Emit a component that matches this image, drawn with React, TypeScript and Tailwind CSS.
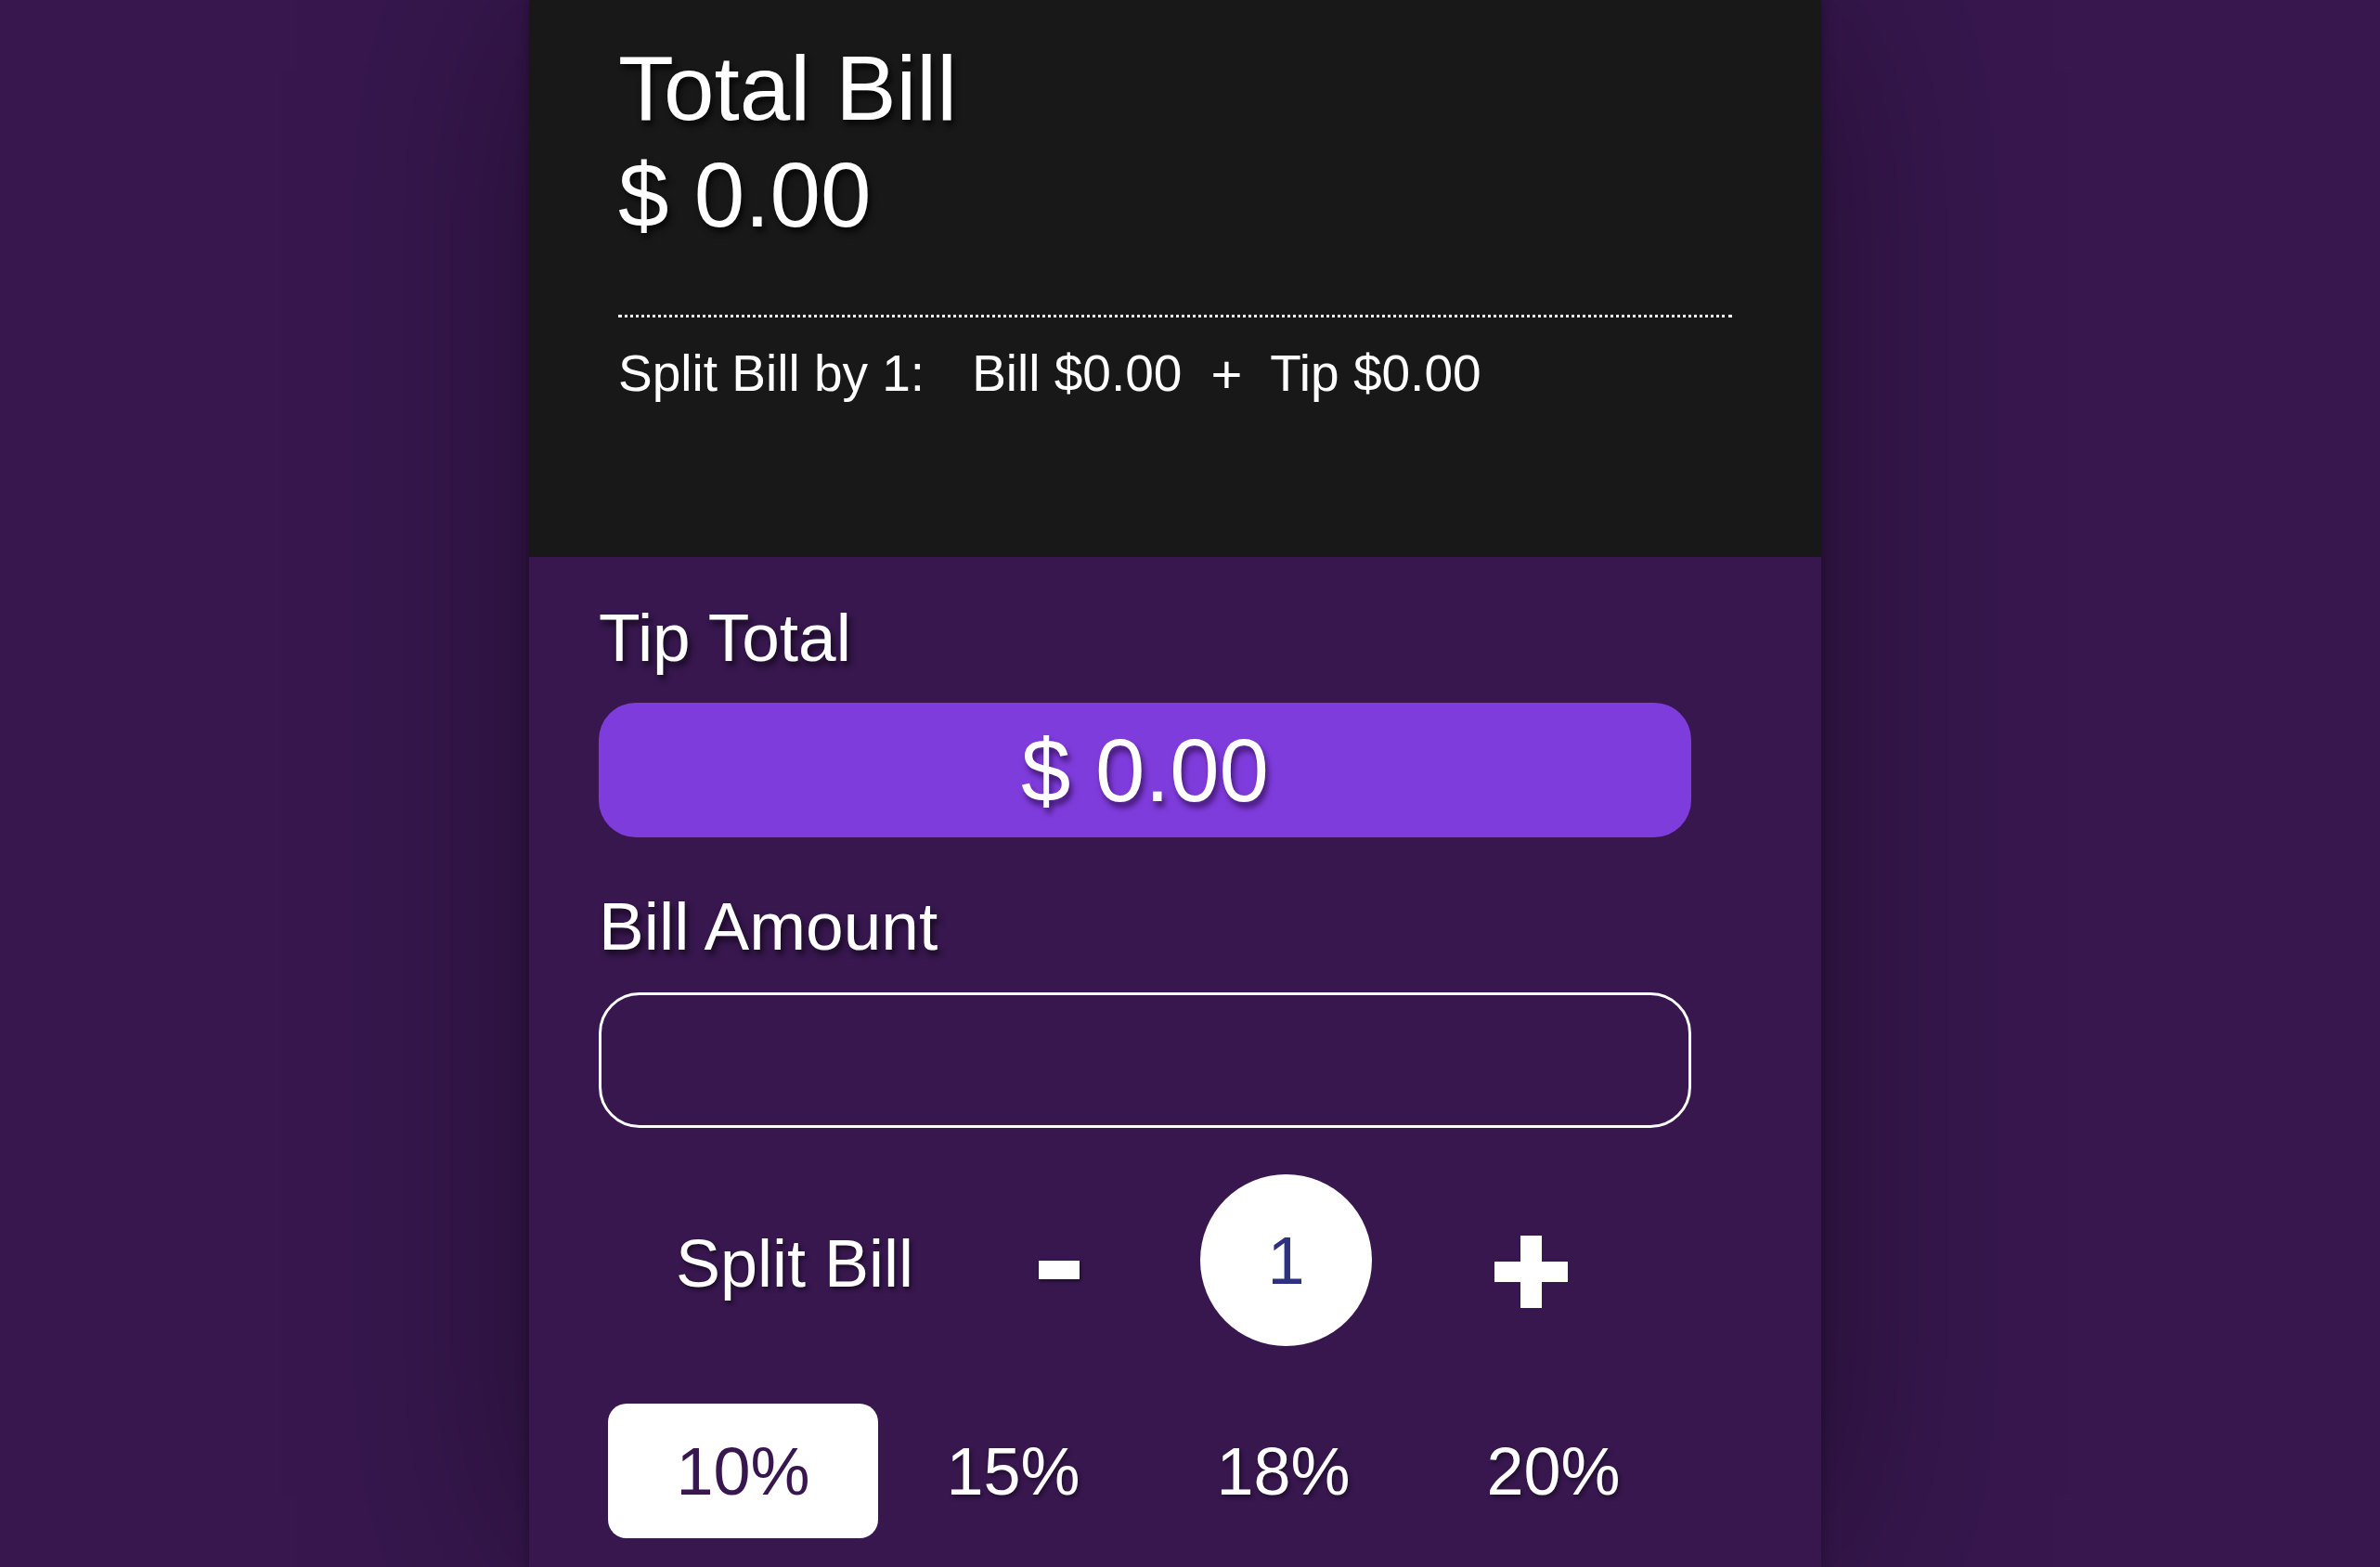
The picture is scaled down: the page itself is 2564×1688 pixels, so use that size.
import React, { useState } from 'react';

const tips = ['10%', '15%', '18%', '20%'];

const App = () => {
  const [tip, setTip] = useState('10%');
  const [people, setPeople] = useState(1);

  return (
    <div className="h-[1688px] overflow-hidden bg-[#37174e] font-['Liberation_Sans',Arial,sans-serif] text-white">
      <div className="ml-[570px] h-full w-[1392px] bg-[#37174e] shadow-[0_0_12px_rgba(0,0,0,0.35),0_0_220px_rgba(0,0,0,0.4)]">
        {/* Summary */}
        <header className="h-[600px] bg-[#181818] px-[96px] pt-[38px]">
          <h1 className="text-[98px] leading-[115px] [text-shadow:3px_5px_6px_rgba(0,0,0,0.7)]">Total Bill</h1>
          <p className="text-[98px] leading-[115px] [text-shadow:3px_5px_6px_rgba(0,0,0,0.7)]">$ 0.00</p>
          <div className="mt-[71px] border-t-[3px] border-dotted border-white" />
          <div className="mt-[29px] flex text-[55px] leading-[63px]">
            <span>Split Bill by {people}:</span>
            <span className="ml-[51px]">Bill $0.00</span>
            <span className="ml-[31px] text-[58px]">+</span>
            <span className="ml-[30px]">Tip $0.00</span>
          </div>
        </header>

        {/* Inputs */}
        <section className="px-[75px] pt-[45px]">
          <h2 className="text-[73px] leading-[84px] [text-shadow:3px_5px_6px_rgba(0,0,0,0.6)]">Tip Total</h2>
          <div className="mt-[28px] flex h-[145px] w-[1177px] items-center justify-center rounded-[40px] bg-[#7f3cdc] text-[96px] [text-shadow:3px_6px_6px_rgba(40,10,70,0.7)]">
            $ 0.00
          </div>

          <h2 className="mt-[54px] text-[73px] leading-[84px] [text-shadow:3px_5px_6px_rgba(0,0,0,0.6)]">Bill Amount</h2>
          <input
            type="text"
            className="mt-[29px] block h-[146px] w-[1177px] rounded-[44px] border-[3px] border-white bg-transparent px-[40px] text-[72px] text-white outline-none"
          />

          {/* Split bill */}
          <div className="mt-[50px] flex h-[185px] items-center">
            <span className="ml-[83px] mt-[8px] text-[72px] leading-[83px] [text-shadow:2px_3px_4px_rgba(0,0,0,0.5)]">Split Bill</span>
            <button
              aria-label="minus"
              className="ml-[135px] mt-[20px] flex h-[20px] w-[44px] items-center"
              onClick={() => setPeople(Math.max(1, people - 1))}
            >
              <span className="block h-[20px] w-[44px] bg-white shadow-[1px_2px_3px_rgba(0,0,0,0.5)]" />
            </button>
            <div className="ml-[130px] flex h-[185px] w-[185px] items-center justify-center rounded-full bg-white text-[72px] text-[#2e3180]">
              {people}
            </div>
            <button
              aria-label="plus"
              className="relative ml-[132px] mt-[24px] h-[78px] w-[79px]"
              onClick={() => setPeople(people + 1)}
            >
              <span className="absolute left-0 top-[28px] block h-[22px] w-[79px] bg-white" />
              <span className="absolute left-[28px] top-0 block h-[78px] w-[23px] bg-white" />
            </button>
          </div>

          {/* Tip percentages */}
          <div className="ml-[10px] mt-[62px] flex">
            {tips.map((t) => (
              <button
                key={t}
                onClick={() => setTip(t)}
                className={
                  tip === t
                    ? 'flex h-[145px] w-[291px] items-center justify-center rounded-[20px] bg-white text-[72px] text-[#37174e]'
                    : 'flex h-[145px] w-[291px] items-center justify-center rounded-[20px] text-[72px] text-white [text-shadow:2px_3px_4px_rgba(0,0,0,0.4)]'
                }
              >
                {t}
              </button>
            ))}
          </div>
        </section>
      </div>
    </div>
  );
};

export default App;
